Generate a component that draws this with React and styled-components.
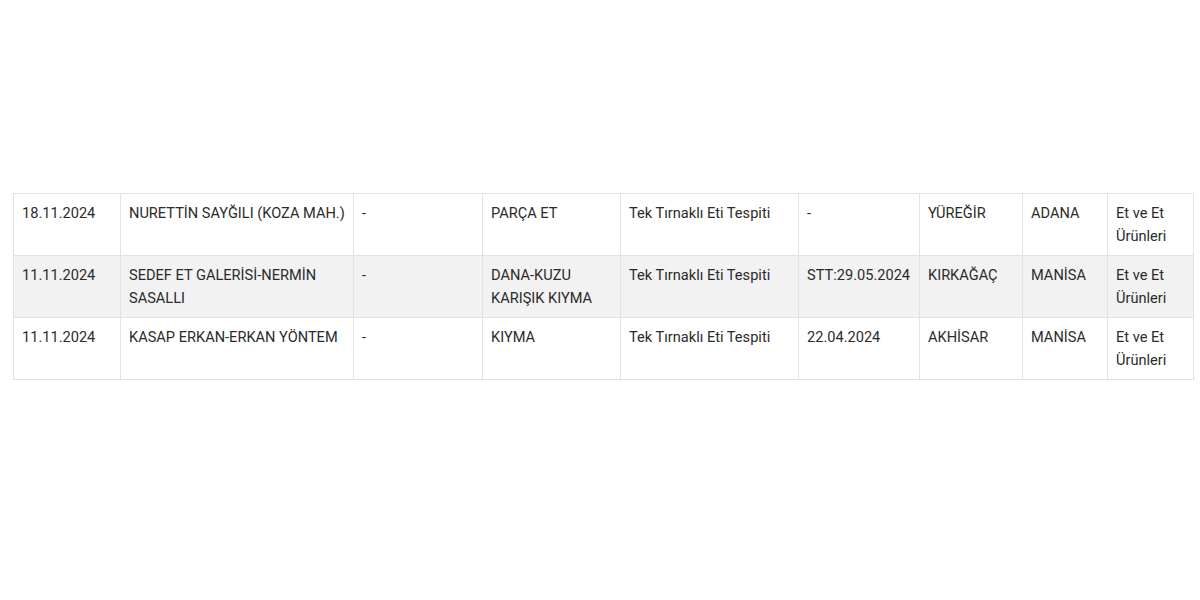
import React from "react";
import styled, { createGlobalStyle } from "styled-components";

const Global = createGlobalStyle`
  html, body { margin: 0; padding: 0; background: #fff; }
  body { font-family: Roboto, "Noto Sans", sans-serif; }
`;

const Page = styled.div`
  padding: 193px 7px 0 13px;
`;

const Table = styled.table`
  width: 1180px;
  border-collapse: collapse;
  table-layout: fixed;
  border: 1px solid #e2e2e2;
  font-size: 14.6px;
  line-height: 23px;
  color: #2b2b2b;
`;

const Row = styled.tr`
  background: ${(p) => (p.$striped ? "#f2f2f2" : "#ffffff")};
`;

const Cell = styled.td`
  border: 1px solid #e2e2e2;
  padding: 8px 6px 7px 8px;
  vertical-align: top;
  text-align: left;
`;

const widths = [107, 233, 129, 138, 178, 121, 103, 85, 86];

const rows = [
  ["18.11.2024", "NURETTİN SAYĞILI (KOZA MAH.)", "-", "PARÇA ET", "Tek Tırnaklı Eti Tespiti", "-", "YÜREĞİR", "ADANA", "Et ve Et Ürünleri"],
  ["11.11.2024", "SEDEF ET GALERİSİ-NERMİN SASALLI", "-", "DANA-KUZU KARIŞIK KIYMA", "Tek Tırnaklı Eti Tespiti", "STT:29.05.2024", "KIRKAĞAÇ", "MANİSA", "Et ve Et Ürünleri"],
  ["11.11.2024", "KASAP ERKAN-ERKAN YÖNTEM", "-", "KIYMA", "Tek Tırnaklı Eti Tespiti", "22.04.2024", "AKHİSAR", "MANİSA", "Et ve Et Ürünleri"],
];

export default function App() {
  return (
    <>
      <Global />
      <Page>
        <Table>
          <colgroup>
            {widths.map((w, i) => (
              <col key={i} style={{ width: w }} />
            ))}
          </colgroup>
          <tbody>
            {rows.map((r, i) => (
              <Row key={i} $striped={i === 1}>
                {r.map((c, j) => (
                  <Cell key={j}>{c}</Cell>
                ))}
              </Row>
            ))}
          </tbody>
        </Table>
      </Page>
    </>
  );
}
